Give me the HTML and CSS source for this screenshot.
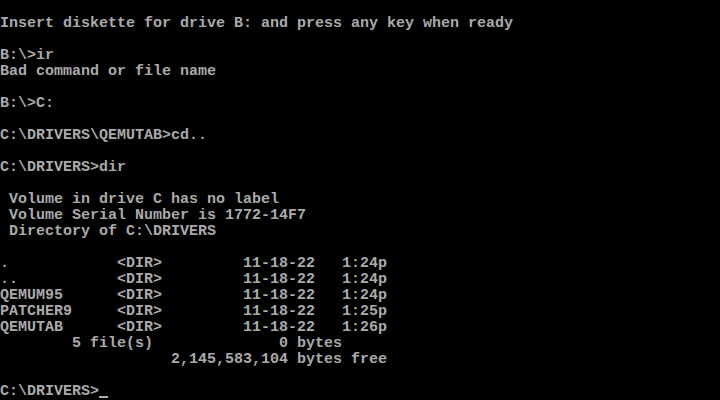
FILE: index.html
```html
<!DOCTYPE html>
<html lang="en">
<head>
    <meta charset="UTF-8">
    <meta name="viewport" content="width=device-width, initial-scale=1.0">
    <title>MS-DOS</title>
    <link rel="stylesheet" href="styles.css">
</head>
<body>
    <div class="screen">
<pre class="console">

Insert diskette for drive B: and press any key when ready

B:\>ir
Bad command or file name

B:\>C:

C:\DRIVERS\QEMUTAB>cd..

C:\DRIVERS>dir

 Volume in drive C has no label
 Volume Serial Number is 1772-14F7
 Directory of C:\DRIVERS

.            &lt;DIR&gt;         11-18-22   1:24p
..           &lt;DIR&gt;         11-18-22   1:24p
QEMUM95      &lt;DIR&gt;         11-18-22   1:24p
PATCHER9     &lt;DIR&gt;         11-18-22   1:25p
QEMUTAB      &lt;DIR&gt;         11-18-22   1:26p
        5 file(s)              0 bytes
                   2,145,583,104 bytes free

C:\DRIVERS&gt;<span class="cursor"></span></pre>
    </div>
</body>
</html>
```

FILE: styles.css
```css
*{
    padding: 0;
    margin: 0;
    box-sizing: border-box;
}

html, body{
    height: 100%;
    background-color: #000;
}

.screen {
    width: 720px;
    height: 400px;
    overflow: hidden;
    background-color: #000;
}

.console {
    font-family: "Liberation Mono", "DejaVu Sans Mono", monospace;
    font-size: 15px;
    line-height: 16px;
    font-weight: bold;
    color: #aaaaaa;
    white-space: pre;
}

.cursor {
    display: inline-block;
    width: 9px;
    height: 2px;
    vertical-align: -3px;
    background-color: #aaaaaa;
}
```
